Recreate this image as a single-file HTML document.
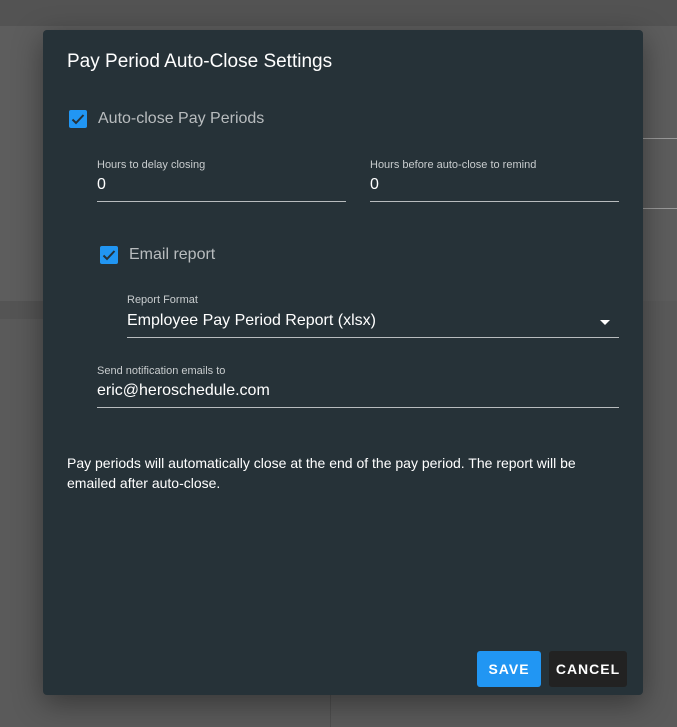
<!DOCTYPE html>
<html><head><style>
*{margin:0;padding:0;box-sizing:border-box}
body{width:677px;height:727px;background:#5a5a5a;font-family:"Liberation Sans",sans-serif;position:relative;overflow:hidden}
.a{position:absolute}
.cb{position:absolute;width:18px;height:18px;background:#2196f3;border-radius:2px}
.cb svg{position:absolute;left:1px;top:1px}
.lbl{position:absolute;font-size:11px;color:#c8ccce}
.val{position:absolute;font-size:16px;color:#fff}
.line{position:absolute;height:1px;background:#b8bcbe}
</style></head><body>
<div class="a" style="left:0;top:0;width:677px;height:26px;background:#535353"></div>
<div class="a" style="left:0;top:26px;width:330px;height:275px;background:#5d5d5d"></div>
<div class="a" style="left:0;top:301px;width:330px;height:18px;background:#545454"></div>
<div class="a" style="left:330px;top:26px;width:347px;height:275px;background:#5d5d5d"></div>
<div class="a" style="left:643px;top:138px;width:34px;height:1px;background:#9a9a9a"></div>
<div class="a" style="left:643px;top:208px;width:34px;height:1px;background:#9a9a9a"></div>
<div class="a" style="left:330px;top:319px;width:1px;height:408px;background:#4e4e4e"></div>
<div class="a" style="left:43px;top:30px;width:600px;height:665px;background:#263238;border-radius:4px;box-shadow:0 8px 30px rgba(0,0,0,.4)">
  <div class="a" style="left:24px;top:21px;font-size:19px;color:#fff">Pay Period Auto-Close Settings</div>
  <div class="cb" style="left:26px;top:80px"><svg width="16" height="16" viewBox="0 0 16 16"><path d="M2.5 8.5l3.5 3.5 7.5-8" stroke="#263238" stroke-width="2" fill="none"/></svg></div>
  <div class="a" style="left:55px;top:80px;font-size:16px;color:#b8bcbe">Auto-close Pay Periods</div>
  <div class="lbl" style="left:54px;top:129px">Hours to delay closing</div>
  <div class="val" style="left:54px;top:146px">0</div>
  <div class="line" style="left:54px;top:171px;width:249px"></div>
  <div class="lbl" style="left:327px;top:129px">Hours before auto-close to remind</div>
  <div class="val" style="left:327px;top:146px">0</div>
  <div class="line" style="left:327px;top:171px;width:249px"></div>
  <div class="cb" style="left:57px;top:216px"><svg width="16" height="16" viewBox="0 0 16 16"><path d="M2.5 8.5l3.5 3.5 7.5-8" stroke="#263238" stroke-width="2" fill="none"/></svg></div>
  <div class="a" style="left:86px;top:216px;font-size:16px;color:#b8bcbe">Email report</div>
  <div class="lbl" style="left:84px;top:264px">Report Format</div>
  <div class="val" style="left:84px;top:282px">Employee Pay Period Report (xlsx)</div>
  <div class="a" style="left:557px;top:290px;width:0;height:0;border-left:5px solid transparent;border-right:5px solid transparent;border-top:5px solid #fff"></div>
  <div class="line" style="left:84px;top:307px;width:492px"></div>
  <div class="lbl" style="left:54px;top:335px">Send notification emails to</div>
  <div class="val" style="left:54px;top:352px">eric@heroschedule.com</div>
  <div class="line" style="left:54px;top:377px;width:522px"></div>
  <div class="a" style="left:24px;top:423px;width:560px;font-size:14px;line-height:20px;color:#fff">Pay periods will automatically close at the end of the pay period. The report will be emailed after auto-close.</div>
  <div class="a" style="left:434px;top:621px;width:64px;height:36px;background:#2196f3;border-radius:3px;color:#fff;font-size:14px;font-weight:bold;letter-spacing:1px;text-align:center;line-height:36px">SAVE</div>
  <div class="a" style="left:506px;top:621px;width:78px;height:36px;background:#222;border-radius:3px;color:#fff;font-size:14px;font-weight:bold;letter-spacing:1px;text-align:center;line-height:36px">CANCEL</div>
</div>
</body></html>
